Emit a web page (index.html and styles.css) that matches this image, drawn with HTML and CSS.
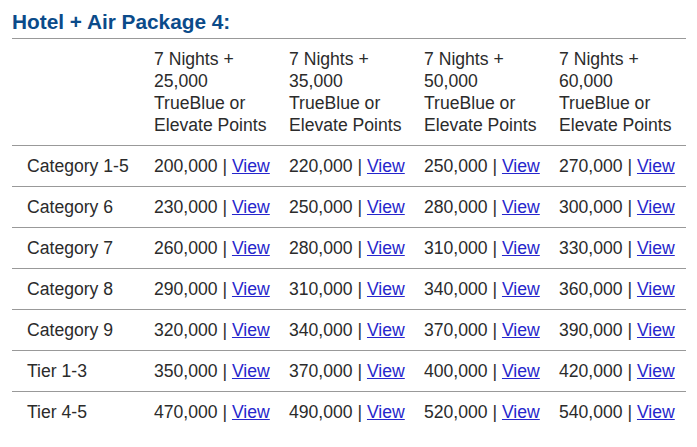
FILE: index.html
```html
<!DOCTYPE html>
<html>
<head>
<meta charset="utf-8">
<link rel="stylesheet" href="styles.css">
</head>
<body>
<div class="wrap">
  <h2 class="title">Hotel + Air Package 4:</h2>
  <table class="pkg">
    <colgroup>
      <col class="c1"><col class="cn"><col class="cn"><col class="cn"><col class="cl">
    </colgroup>
    <thead>
      <tr>
        <th></th>
        <th>7 Nights +<br>25,000<br>TrueBlue or<br>Elevate Points</th>
        <th>7 Nights +<br>35,000<br>TrueBlue or<br>Elevate Points</th>
        <th>7 Nights +<br>50,000<br>TrueBlue or<br>Elevate Points</th>
        <th>7 Nights +<br>60,000<br>TrueBlue or<br>Elevate Points</th>
      </tr>
    </thead>
    <tbody>
      <tr><td>Category 1-5</td><td>200,000 | <a href="#">View</a></td><td>220,000 | <a href="#">View</a></td><td>250,000 | <a href="#">View</a></td><td>270,000 | <a href="#">View</a></td></tr>
      <tr><td>Category 6</td><td>230,000 | <a href="#">View</a></td><td>250,000 | <a href="#">View</a></td><td>280,000 | <a href="#">View</a></td><td>300,000 | <a href="#">View</a></td></tr>
      <tr><td>Category 7</td><td>260,000 | <a href="#">View</a></td><td>280,000 | <a href="#">View</a></td><td>310,000 | <a href="#">View</a></td><td>330,000 | <a href="#">View</a></td></tr>
      <tr><td>Category 8</td><td>290,000 | <a href="#">View</a></td><td>310,000 | <a href="#">View</a></td><td>340,000 | <a href="#">View</a></td><td>360,000 | <a href="#">View</a></td></tr>
      <tr><td>Category 9</td><td>320,000 | <a href="#">View</a></td><td>340,000 | <a href="#">View</a></td><td>370,000 | <a href="#">View</a></td><td>390,000 | <a href="#">View</a></td></tr>
      <tr><td>Tier 1-3</td><td>350,000 | <a href="#">View</a></td><td>370,000 | <a href="#">View</a></td><td>400,000 | <a href="#">View</a></td><td>420,000 | <a href="#">View</a></td></tr>
      <tr><td>Tier 4-5</td><td>470,000 | <a href="#">View</a></td><td>490,000 | <a href="#">View</a></td><td>520,000 | <a href="#">View</a></td><td>540,000 | <a href="#">View</a></td></tr>
    </tbody>
  </table>
</div>
</body>
</html>
```
FILE: styles.css
```css
html, body {
  margin: 0;
  padding: 0;
  background: #fff;
}
body {
  font-family: "Liberation Sans", Arial, sans-serif;
  font-size: 17.6px;
  color: #2b2b2b;
}
.wrap {
  padding: 0 11px 0 12px;
}
.title {
  margin: 0;
  padding-top: 10px;
  height: 38px;
  box-sizing: border-box;
  font-size: 20.8px;
  line-height: 23px;
  font-weight: bold;
  color: #0b4b8a;
}
.pkg {
  width: 674px;
  table-layout: fixed;
  border-collapse: collapse;
  border-spacing: 0;
  border-top: 1px solid #999;
}
.c1 { width: 142px; }
.cn { width: 135px; }
.cl { width: 127px; }
.pkg th {
  font-weight: normal;
  text-align: left;
  vertical-align: top;
  line-height: 22px;
  padding: 9px 0 9px 0;
  white-space: nowrap;
  border-bottom: 1px solid #999;
}
.pkg td {
  line-height: 22px;
  padding: 9px 0 9px 0;
  white-space: nowrap;
  border-bottom: 1px solid #999;
}
.pkg td:first-child {
  padding-left: 15px;
}
.pkg tbody tr:last-child td {
  border-bottom: none;
}
.pkg a {
  color: #2626cc;
  text-decoration: underline;
}
```
